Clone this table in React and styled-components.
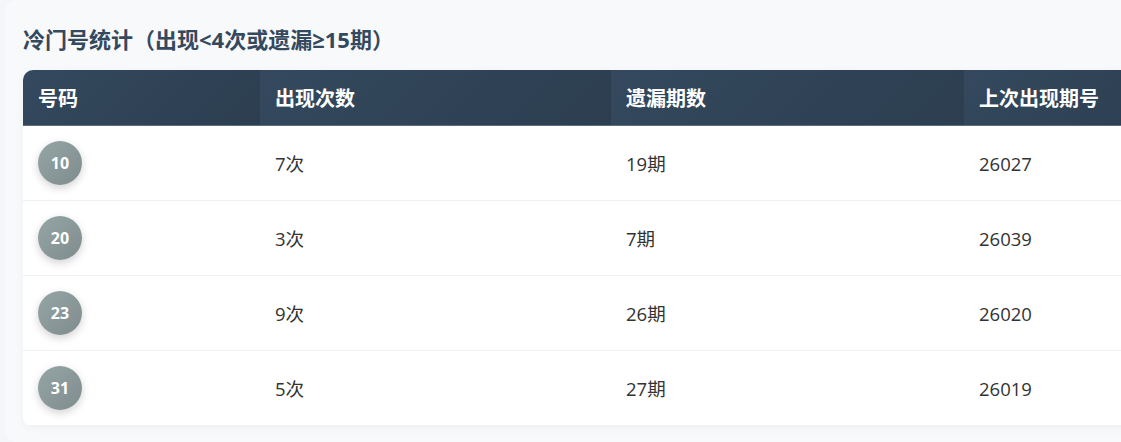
import React from 'react';
import styled, { createGlobalStyle } from 'styled-components';

const GlobalStyle = createGlobalStyle`
  html, body {
    margin: 0;
    padding: 0;
    background: #f4f6f9;
    overflow: hidden;
  }
  body {
    font-family: "Open Sans", "Noto Sans CJK SC", sans-serif;
  }
`;

const Panel = styled.section`
  margin-left: 5px;
  width: 1180px;
  min-height: 442px;
  background: #f8f9fb;
  border-radius: 12px 0 0 12px;
  padding: 22px 0 0 18px;
  box-sizing: border-box;
`;

const Title = styled.h3`
  margin: 0 0 14px;
  font-size: 22px;
  font-weight: 700;
  line-height: 34px;
  color: #34495e;
  font-family: "Open Sans", "Noto Sans CJK SC", sans-serif;
`;

const Table = styled.table`
  width: 1157px;
  border-collapse: separate;
  border-spacing: 0;
  background: #fff;
  border-radius: 10px 0 0 8px;
  overflow: hidden;
  box-shadow: 0 2px 8px rgba(0, 0, 0, 0.04);
`;

const HeadCell = styled.th`
  width: ${p => p.$w}px;
  height: 56px;
  padding: 0 15px;
  text-align: left;
  font-size: 20px;
  font-weight: 700;
  color: #fff;
  font-family: "Noto Sans CJK SC", sans-serif;
  background: linear-gradient(135deg, #34495e 0%, #2c3e50 100%);
  box-sizing: border-box;
  border-bottom: 1px solid #5d6d7e;
`;

const Cell = styled.td`
  height: 75px;
  padding: 0 15px;
  font-size: 18.5px;
  color: #333;
  border-bottom: 1px solid #eef0f2;
  box-sizing: border-box;
  font-family: "Open Sans", "Noto Sans CJK SC", sans-serif;
`;

const Ball = styled.span`
  display: inline-flex;
  align-items: center;
  justify-content: center;
  width: 44px;
  height: 44px;
  border-radius: 50%;
  background: linear-gradient(135deg, #95a5a6 0%, #7f8c8d 100%);
  color: #fff;
  font-size: 16px;
  font-weight: 700;
  box-shadow: 0 3px 8px rgba(0, 0, 0, 0.18);
  vertical-align: middle;
`;

const columns = [
  { label: '号码', w: 237 },
  { label: '出现次数', w: 351 },
  { label: '遗漏期数', w: 353 },
  { label: '上次出现期号', w: 216 },
];

const coldNumbers = [
  { num: '10', count: 7, miss: 19, last: '26027' },
  { num: '20', count: 3, miss: 7, last: '26039' },
  { num: '23', count: 9, miss: 26, last: '26020' },
  { num: '31', count: 5, miss: 27, last: '26019' },
];

const App = () => (
  <>
    <GlobalStyle />
    <Panel>
      <Title>冷门号统计（出现&lt;4次或遗漏≥15期）</Title>
      <Table>
        <thead>
          <tr>
            {columns.map(c => (
              <HeadCell key={c.label} $w={c.w}>{c.label}</HeadCell>
            ))}
          </tr>
        </thead>
        <tbody>
          {coldNumbers.map(row => (
            <tr key={row.num}>
              <Cell><Ball>{row.num}</Ball></Cell>
              <Cell>{row.count}次</Cell>
              <Cell>{row.miss}期</Cell>
              <Cell>{row.last}</Cell>
            </tr>
          ))}
        </tbody>
      </Table>
    </Panel>
  </>
);

export default App;
